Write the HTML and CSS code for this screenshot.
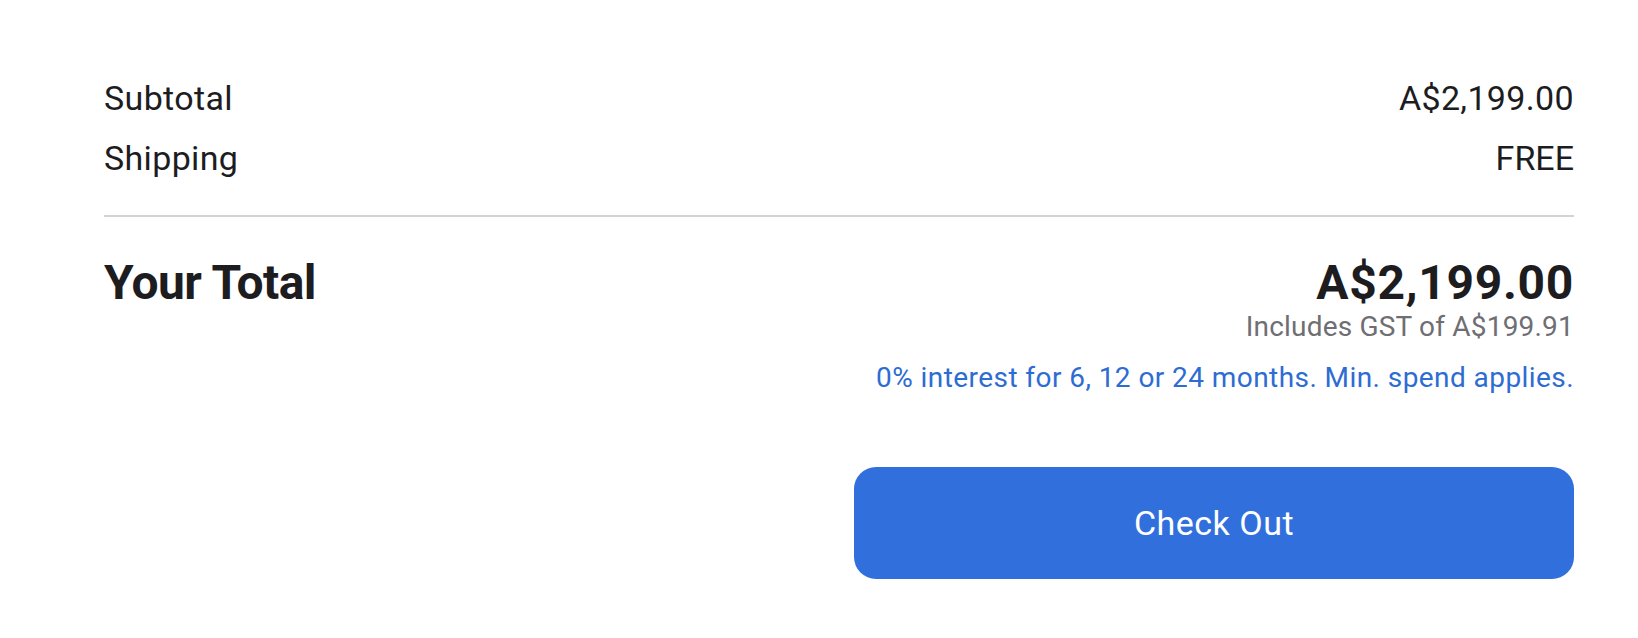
FILE: index.html
```html
<!DOCTYPE html>
<html lang="en">
<head>
<meta charset="utf-8">
<title>Bag Summary</title>
<link rel="stylesheet" href="styles.css">
</head>
<body>
<div class="summary">
  <div class="lines">
    <div class="row"><span>Subtotal</span><span>A$2,199.00</span></div>
    <div class="row"><span>Shipping</span><span class="free">FREE</span></div>
  </div>
  <div class="divider"></div>
  <div class="total">
    <div class="total-label">Your Total</div>
    <div class="total-right">
      <div class="total-price">A$2,199.00</div>
      <div class="gst">Includes GST of A$199.91</div>
      <a class="finance" href="#">0% interest for 6, 12 or 24 months. Min. spend applies.</a>
    </div>
  </div>
  <div class="actions">
    <button class="checkout" type="button">Check Out</button>
  </div>
</div>
</body>
</html>
```

FILE: styles.css
```css
html, body {
  margin: 0;
  padding: 0;
  background: #ffffff;
}

body {
  font-family: Roboto, "Liberation Sans", Arial, sans-serif;
  color: #1d1d1f;
}

.summary {
  width: 1470px;
  margin-left: 104px;
  padding-top: 68px;
}

.lines {
  display: flex;
  flex-direction: column;
}

.row {
  display: flex;
  justify-content: space-between;
  font-size: 34px;
  line-height: 60px;
  letter-spacing: 0.35px;
}

.row .free {
  letter-spacing: 0;
}

.divider {
  height: 2px;
  background: #d2d2d7;
  margin-top: 27px;
}

.total {
  display: flex;
  justify-content: space-between;
  align-items: flex-start;
  margin-top: 38px;
}

.total-label {
  font-size: 48px;
  line-height: 56px;
  font-weight: 700;
  letter-spacing: -0.6px;
}

.total-right {
  display: flex;
  flex-direction: column;
  align-items: flex-end;
}

.total-price {
  font-size: 48px;
  line-height: 56px;
  font-weight: 700;
  letter-spacing: 0.7px;
}

.gst {
  font-size: 28px;
  line-height: 32px;
  color: #6e6e73;
  letter-spacing: 0.2px;
}

.finance {
  font-size: 28px;
  line-height: 32px;
  color: #2d6cd2;
  text-decoration: none;
  margin-top: 19px;
  letter-spacing: 0.43px;
}

.actions {
  display: flex;
  justify-content: flex-end;
  margin-top: 73px;
}

.checkout {
  width: 720px;
  height: 112px;
  border: none;
  border-radius: 22px;
  background: #3170dc;
  color: #ffffff;
  font-family: Roboto, "Liberation Sans", Arial, sans-serif;
  font-size: 34px;
  line-height: 38px;
  letter-spacing: 0.5px;
  padding: 0;
  display: flex;
  align-items: center;
  justify-content: center;
}
```
